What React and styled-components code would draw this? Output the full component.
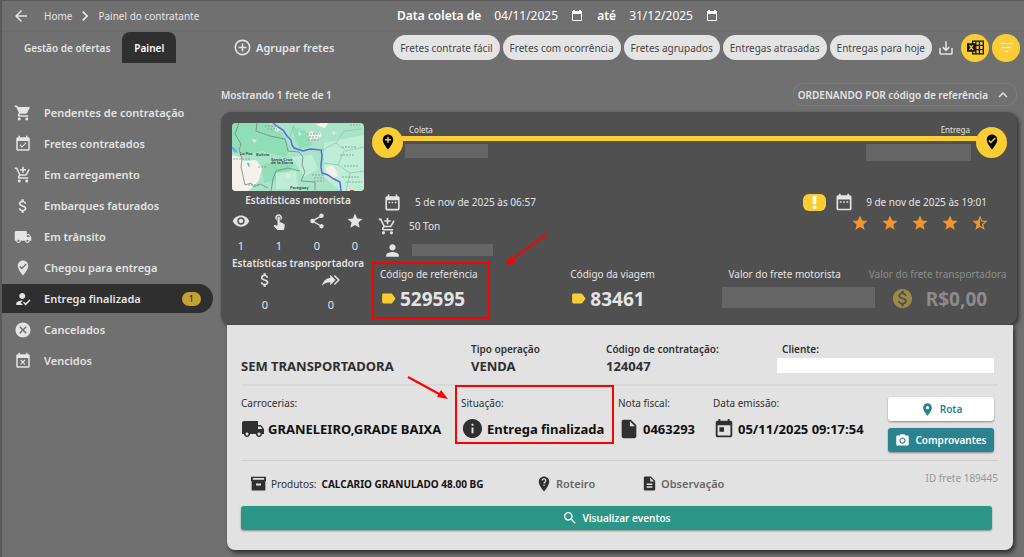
import styled, { createGlobalStyle, css } from "styled-components";
import { useState } from "react";
import {
  MdAddCircleOutline,
  MdAddShoppingCart,
  MdArrowBack,
  MdAttachMoney,
  MdCancel,
  MdChevronRight,
  MdDateRange,
  MdDescription,
  MdEventAvailable,
  MdEventBusy,
  MdExpandLess,
  MdFilterList,
  MdHowToReg,
  MdInfo,
  MdInsertDriveFile,
  MdLabel,
  MdLocalShipping,
  MdLocationOn,
  MdMonetizationOn,
  MdPerson,
  MdPhotoCamera,
  MdSaveAlt,
  MdSearch,
  MdShare,
  MdShoppingCart,
  MdStar,
  MdStarHalf,
  MdToday,
  MdTouchApp,
  MdVisibility,
} from "react-icons/md";

const PIN = "M12 2c3.9 0 7 3.1 7 7 0 5.2-7 13-7 13S5 14.200 5 9c0-3.900 3.100-7 7-7z";

const PinCheck = ({ size }) => (
  <svg width={size} height={size} viewBox="0 0 24 24" fill="currentColor" fillRule="evenodd">
    <path d={`${PIN}M10.470 14 17 7.410 15.600 6l-5.130 5.180L8.400 9.090 7 10.500z`} />
  </svg>
);

const PinPlus = ({ size }) => (
  <svg width={size} height={size} viewBox="0 0 24 24" fill="currentColor" fillRule="evenodd">
    <path d={`${PIN}M11 5v3H8v2h3v3h2v-3h3V8h-3V5z`} />
  </svg>
);

const PinQuestion = ({ size }) => (
  <svg width={size} height={size} viewBox="0 0 24 24">
    <path fill="currentColor" d={PIN} />
    <path fill="none" stroke="#e2e2e2" strokeWidth="1.6" d="M9.700 7.400a2.300 2.300 0 1 1 3.600 1.900c-.8.6-1.300 1-1.300 2.200" />
    <circle cx="12" cy="13.500" r="1" fill="#e2e2e2" />
  </svg>
);

const ShareAll = ({ size }) => (
  <svg width={size} height={size} viewBox="0 0 24 24" fill="currentColor">
    <path d="M11 9V5l7 7-7 7v-4.100C6 14.900 2.500 16.500 0 20 1 15 4 10 11 9" />
    <path fill="none" stroke="currentColor" strokeWidth="2" d="M16.500 6l6 6-6 6" />
  </svg>
);

const BoxIcon = ({ size }) => (
  <svg width={size} height={size} viewBox="0 0 24 24" fill="currentColor" fillRule="evenodd">
    <path d="M0 1h24v7h-1v15H1V8H0zm3 2v3h18V3zm5 9v3h8v-3z" />
  </svg>
);

const ExcelIcon = ({ size }) => (
  <svg width={size} height={size} viewBox="0 0 24 24">
    <path
      fill="none"
      stroke="#111"
      strokeWidth="1.800"
      d="M8 3h15v18H8zM10 9h13M10 15h13M12.500 3v18M17.500 3v18"
    />
    <path fill="#111" d="M0 6h12v12H0z" />
    <path stroke="#fbcd35" strokeWidth="1.800" d="M3.500 8.500l5 7M8.500 8.500l-5 7" />
  </svg>
);

const CalendarGlyph = () => (
  <svg width="12" height="12" viewBox="0 0 12 12">
    <path fill="none" stroke="#fff" d="M1.500 2.500h9v8h-9z" />
    <path fill="#fff" d="M1 1h10v3H1zM2 0h2v2H2zM8 0h2v2H8z" />
  </svg>
);

const RouteMap = () => (
  <svg viewBox="0 0 132 68" preserveAspectRatio="xMidYMid slice" role="img" aria-label="Mapa da rota">
    <rect width="132" height="68" fill="#a9e4c8" />
    <path fill="#8adcb4" d="M0 0h36l14 10 8 14-4 10-24-6-18 4-12-10zM30 42l18-6 14 6-10 14-20 4zM60 4l14 4 6 14-12 4-6-12z" opacity="0.800" />
    <path fill="#bfeed8" d="M92 20l40-8v56h-24l-16-14zM60 34l20-2 6 14-14 8zM44 50l20-2 2 18H44z" />
    <path fill="#f5f2ec" d="M0 32l8 2 4 4 12-1 6 8-3 12-5 6-6 5H0zM76 10l4-2 3 4 5-3 2 4-5 3-4-1-3 3zM84 2l4-2h8l-3 5zM94 44l6-2 4 5 2 6-5 2-6-3z" />
    <path fill="#d8f0dc" d="M44 4l4 2-2 3-4-2zM54 50l5 1-2 4-3-1zM66 8l4 3-3 2zM100 8l5 2-4 2zM20 16l5 1-3 3z" />
    <path fill="#5bb8dd" d="M0 23l4 3 2 4-4-1-2-3zM15 40l2 0 1 4-2-1z" />
    <g fill="none" stroke="#72877c">
      <path d="M7 0L3 11l3 5 3 5-2 6 3 9-1 8 4 18 6-2 3 4 6-3 8 4M25 0l-1 8 14 5 15 3 3 12 11 1 4 5-1 8 3 7-4 9 14 1v8M39 68l2-12 3-8 12-3 12 3" strokeWidth="0.800" />
      <path stroke="#93c5ad" strokeWidth="0.800" d="M92 26l12-6 8-12 18-2M104 20l10 8 18-4M112 28l-6 14 12 8 14-2M106 42l-14-2M118 50l-4 18M62 2l-4 12" />
    </g>
    <path fill="none" stroke="#5668e6" strokeWidth="1.500" d="M41 0l5 4 5 3 4 6 4 4 1 5 2 3 9 3 7-2 11 1 1 5-1 12 1 6 6 2 6 4 6 3 1 9" />
    <g fill="#435049" fontSize="4" fontWeight="700">
      <text x="24" y="33">Bolivia</text>
      <text x="39" y="38">Santa Cruz</text>
      <text x="39" y="41">de la Sierra</text>
      <text x="58" y="66">Paraguay</text>
      <text x="8" y="32">La Paz</text>
    </g>
    <g fill="none" stroke="#8ea39a" strokeWidth="1.200" strokeDasharray="2 1">
      <path d="M75 11h13M77 14h10M76 17h12M33 3h14M35 6h10M118 2h10M110 24h14M108 32h14M112 43h14M80 52h12M82 55h10M82 58h10M110 54h18M114 59h16M16 62h12M26 44h9M84 27h8M1 36h18" />
    </g>
    <path fill="#d9472f" d="M118 67h4v1h-4z" />
  </svg>
);

const menu = [
  { label: "Pendentes de contratação", Icon: MdShoppingCart },
  { label: "Fretes contratados", Icon: MdEventAvailable },
  { label: "Em carregamento", Icon: MdAddShoppingCart },
  { label: "Embarques faturados", Icon: MdAttachMoney },
  { label: "Em trânsito", Icon: MdLocalShipping },
  { label: "Chegou para entrega", Icon: PinCheck },
  { label: "Entrega finalizada", Icon: MdHowToReg, count: 1 },
  { label: "Cancelados", Icon: MdCancel },
  { label: "Vencidos", Icon: MdEventBusy },
];

const quickFilters = [
  "Fretes contrate fácil",
  "Fretes com ocorrência",
  "Fretes agrupados",
  "Entregas atrasadas",
  "Entregas para hoje",
];

const driverStats = [
  { label: "Visualizações", Icon: MdVisibility, value: 1 },
  { label: "Cliques", Icon: MdTouchApp, value: 1 },
  { label: "Compartilhamentos", Icon: MdShare, value: 0 },
  { label: "Favoritos", Icon: MdStar, value: 0 },
];

const carrierStats = [
  { label: "Propostas", Icon: MdAttachMoney, value: 0 },
  { label: "Encaminhamentos", Icon: ShareAll, value: 0 },
];

const App = () => {
  const [active, setActive] = useState("Entrega finalizada");
  const [from, setFrom] = useState("04/11/2025");
  const [to, setTo] = useState("31/12/2025");

  return (
    <>
      <GlobalStyle />
      <Page>
        <TopBar>
          <Breadcrumb aria-label="Navegação">
            <IconButton aria-label="Voltar"><MdArrowBack size={18} /></IconButton>
            <a href="#home">Home</a>
            <MdChevronRight size={20} />
            <a href="#painel">Painel do contratante</a>
          </Breadcrumb>
          <DateRange>
            <label htmlFor="from">Data coleta de</label>
            <DateField>
              <input id="from" value={from} onChange={(e) => setFrom(e.target.value)} />
              <IconButton aria-label="Abrir calendário inicial"><CalendarGlyph /></IconButton>
            </DateField>
            <label htmlFor="to">até</label>
            <DateField>
              <input id="to" value={to} onChange={(e) => setTo(e.target.value)} />
              <IconButton aria-label="Abrir calendário final"><CalendarGlyph /></IconButton>
            </DateField>
          </DateRange>
        </TopBar>

        <ToolBar>
          <Tabs>
            <Tab>Gestão de ofertas</Tab>
            <Tab $active>Painel</Tab>
          </Tabs>
          <GroupButton><MdAddCircleOutline size={19} />Agrupar fretes</GroupButton>
          <Actions>
            {quickFilters.map((name) => <Chip key={name}>{name}</Chip>)}
            <DownloadButton aria-label="Baixar"><MdSaveAlt size={18} /></DownloadButton>
            <RoundButton aria-label="Exportar para Excel"><ExcelIcon size={17} /></RoundButton>
            <RoundButton aria-label="Filtrar"><MdFilterList size={19} /></RoundButton>
          </Actions>
        </ToolBar>

        <Body>
          <Sidebar>
            {menu.map(({ label, Icon, count }) => (
              <MenuItem key={label} $active={active === label} onClick={() => setActive(label)}>
                <Icon size={18} />
                <span>{label}</span>
                {count && <Count>{count}</Count>}
              </MenuItem>
            ))}
          </Sidebar>

          <Main>
            <ListHeader>
              <strong>Mostrando 1 frete de 1</strong>
              <SortButton>ORDENANDO POR código de referência<MdExpandLess size={18} /></SortButton>
            </ListHeader>

            <Shipment>
              <Summary>
                <Stats>
                  <MapFrame><RouteMap /></MapFrame>
                  <StatsTitle>Estatísticas motorista</StatsTitle>
                  <DriverStats>
                    {driverStats.map(({ label, Icon, value }) => (
                      <Stat key={label} title={label}><Icon size={18} />{value}</Stat>
                    ))}
                  </DriverStats>
                  <StatsTitle>Estatísticas transportadora</StatsTitle>
                  <CarrierStats>
                    {carrierStats.map(({ label, Icon, value }) => (
                      <Stat key={label} title={label}><Icon size={18} />{value}</Stat>
                    ))}
                  </CarrierStats>
                </Stats>

                <Trip>
                  <Route>
                    <Stop><PinPlus size={18} /></Stop>
                    <Track>
                      <TrackRow><span>Coleta</span><span>Entrega</span></TrackRow>
                      <TrackLine />
                      <TrackPlaces><Hidden $w={83} $h={14} /><Hidden $w={105} $h={17} /></TrackPlaces>
                    </Track>
                    <Stop><PinCheck size={18} /></Stop>
                  </Route>

                  <Schedule>
                    <Pickup>
                      <InfoLine $indent={11} $gap={13}><MdDateRange size={19} />5 de nov de 2025 às 06:57</InfoLine>
                      <InfoLine $indent={6} $gap={12}><MdAddShoppingCart size={19} />50 Ton</InfoLine>
                      <InfoLine $indent={11} $gap={10}><MdPerson size={19} /><Hidden $w={81} $h={12} /></InfoLine>
                    </Pickup>
                    <Delivery>
                      <InfoLine $indent={0} $gap={8}>
                        <Alert>!</Alert>
                        <DeliveryDate><MdDateRange size={20} />9 de nov de 2025 às 19:01</DeliveryDate>
                      </InfoLine>
                      <Stars role="img" aria-label="4,5 de 5">
                        <MdStar size={18} />
                        <MdStar size={18} />
                        <MdStar size={18} />
                        <MdStar size={18} />
                        <MdStarHalf size={18} />
                      </Stars>
                    </Delivery>
                  </Schedule>

                  <Amounts>
                    <Amount $marked>
                      <span>Código de referência</span>
                      <strong><MdLabel size={17} />529595</strong>
                    </Amount>
                    <Amount>
                      <span>Código da viagem</span>
                      <strong><MdLabel size={17} />83461</strong>
                    </Amount>
                    <Amount>
                      <span>Valor do frete motorista</span>
                      <AmountHidden />
                    </Amount>
                    <Amount $faded>
                      <span>Valor do frete transportadora</span>
                      <strong><MdMonetizationOn size={23} />R$0,00</strong>
                    </Amount>
                  </Amounts>
                </Trip>
              </Summary>

              <Details>
                <ContractRow>
                  <Field><b>SEM TRANSPORTADORA</b></Field>
                  <Field><small>Tipo operação</small><b>VENDA</b></Field>
                  <Field><small>Código de contratação:</small><b>124047</b></Field>
                  <Field $indent>
                    <label htmlFor="cliente">Cliente:</label>
                    <ClientInput id="cliente" readOnly />
                  </Field>
                </ContractRow>

                <StatusRow>
                  <Status>
                    <span>Carrocerias:</span>
                    <b><MdLocalShipping size={24} />GRANELEIRO,GRADE BAIXA</b>
                  </Status>
                  <Status $marked>
                    <span>Situação:</span>
                    <b><MdInfo size={23} />Entrega finalizada</b>
                  </Status>
                  <Status>
                    <span>Nota fiscal:</span>
                    <b><MdInsertDriveFile size={22} />0463293</b>
                  </Status>
                  <Status>
                    <span>Data emissão:</span>
                    <b><MdToday size={22} />05/11/2025 09:17:54</b>
                  </Status>
                  <ButtonColumn>
                    <SmallButton><MdLocationOn size={15} />Rota</SmallButton>
                    <SmallButton $filled><MdPhotoCamera size={15} />Comprovantes</SmallButton>
                  </ButtonColumn>
                </StatusRow>

                <FooterRow>
                  <Product><BoxIcon size={15} /><span>Produtos:</span><b>CALCARIO GRANULADO 48.00 BG</b></Product>
                  <LinkButton><PinQuestion size={18} />Roteiro</LinkButton>
                  <LinkButton><MdDescription size={17} />Observação</LinkButton>
                  <FreightId>ID frete 189445</FreightId>
                </FooterRow>

                <EventsButton><MdSearch size={16} />Visualizar eventos</EventsButton>
              </Details>
              <Arrows viewBox="0 0 797 437">
                <path d="M326 122L290 148M187 265L220 283" stroke="red" strokeWidth="2" />
                <path d="M284 153l6-9 5 7zM227 287l-11-2 4-7z" fill="red" />
              </Arrows>
            </Shipment>
          </Main>
        </Body>
      </Page>
    </>
  );
};

export default App;

const GlobalStyle = createGlobalStyle`
  *, *::after {
    box-sizing: border-box;
  }

  body {
    margin: 0;
    background: #707070;
    color: #e4e4e4;
    font: 11px/16px "Noto Sans", "Liberation Sans", sans-serif;
  }

  button, input {
    font: inherit;
    color: inherit;
    background: none;
    border: 0;
    padding: 0;
    margin: 0;
  }

  button {
    cursor: pointer;
    white-space: nowrap;
  }

  svg {
    display: block;
    flex-shrink: 0;
  }
`;

const Page = styled.div`
  min-height: 100vh;
  border-left: 2px solid #5a5a5a;
  border-top: 1px solid #5a5a5a;
`;

const TopBar = styled.header`
  display: flex;
  align-items: center;
  height: 31px;
  border-bottom: 1px solid #6b6b6b;
`;

const Breadcrumb = styled.nav`
  display: flex;
  align-items: center;
  width: 395px;
  padding-left: 10px;
  font-size: 10px;

  a {
    color: inherit;
    text-decoration: none;
  }

  button {
    margin-right: 14px;
  }

  svg + a {
    margin-left: 3px;
  }

  > svg {
    margin-left: 3px;
  }
`;

const IconButton = styled.button`
  display: inline-flex;
`;

const DateRange = styled.div`
  display: flex;
  align-items: center;
  color: #fff;

  label {
    font-size: 12px;
    font-weight: 600;
    margin-right: 10px;
  }
`;

const DateField = styled.span`
  display: inline-flex;
  align-items: center;
  margin-right: 14px;

  input {
    width: 80px;
    padding-left: 3px;
    font-size: 12px;
  }
`;

const ToolBar = styled.div`
  display: flex;
  align-items: center;
  height: 31px;
  padding-right: 4px;
`;

const Tabs = styled.div`
  display: flex;
  width: 231px;
  padding-left: 10px;
`;

const Tab = styled.button`
  height: 31px;
  padding: 0 12px;
  border-radius: 8px 8px 0 0;
  font-size: 10px;
  font-weight: 600;
  color: ${({ $active }) => ($active ? "#fff" : "#e4e4e4")};
  background: ${({ $active }) => ($active ? "#2f2f2f" : "transparent")};
`;

const GroupButton = styled.button`
  display: flex;
  align-items: center;
  gap: 4px;
  font-weight: 600;
`;

const Actions = styled.div`
  display: flex;
  align-items: center;
  gap: 3px;
  margin-left: auto;
`;

const Chip = styled.button`
  height: 25px;
  padding: 0 7px;
  border-radius: 13px;
  background: #e4e4e4;
  color: #444;
  font-size: 10px;
`;

const DownloadButton = styled(IconButton)`
  margin: 0 3px 0 2px;
`;

const RoundButton = styled.button`
  display: grid;
  place-items: center;
  width: 28px;
  height: 28px;
  border-radius: 50%;
  background: #fbcd35;
`;

const Body = styled.div`
  display: flex;
`;

const Sidebar = styled.nav`
  display: flex;
  flex-direction: column;
  gap: 2px;
  width: 211px;
  padding-top: 35px;
  flex-shrink: 0;
`;

const MenuItem = styled.button`
  display: flex;
  align-items: center;
  height: 29px;
  padding: 0 12px;
  gap: 12px;
  border-radius: 0 15px 15px 0;
  font-weight: 600;
  background: ${({ $active }) => ($active ? "#2f2f2f" : "transparent")};
`;

const Count = styled.span`
  margin-left: auto;
  padding: 0 7px;
  border-radius: 8px;
  line-height: 14px;
  font-size: 9px;
  font-weight: 400;
  color: #222;
  background: #c3a233;
`;

const Main = styled.main`
  flex: 1;
  min-width: 0;
  padding: 20px 7px 8px 8px;
`;

const ListHeader = styled.div`
  display: flex;
  align-items: center;
  justify-content: space-between;
  margin-bottom: 6px;
  font-size: 10px;

  strong {
    font-weight: 600;
  }
`;

const SortButton = styled.button`
  display: flex;
  align-items: center;
  gap: 6px;
  height: 23px;
  padding: 0 4px;
  border: 1px solid #7c7c7c;
  border-radius: 10px;
  font-weight: 600;
`;

const Shipment = styled.article`
  position: relative;
`;

const Summary = styled.section`
  position: relative;
  display: flex;
  gap: 8px;
  height: 213px;
  padding: 11px 10px 0 11px;
  border-radius: 10px;
  background: #505050;
  box-shadow: 2px 2px 4px #303030;
`;

const Stats = styled.div`
  width: 132px;
  flex-shrink: 0;
`;

const MapFrame = styled.div`
  height: 68px;
  overflow: hidden;
  border-radius: 4px;

  svg {
    width: 100%;
    height: 100%;
  }
`;

const StatsTitle = styled.h3`
  margin: 1px -4px 0;
  text-align: center;
  font-size: 10px;
  font-weight: 600;
  white-space: nowrap;
`;

const DriverStats = styled.div`
  display: flex;
  justify-content: space-between;
  padding-top: 4px;
`;

const CarrierStats = styled.div`
  display: flex;
  justify-content: space-between;
  padding: 0 24px;
`;

const Stat = styled.div`
  display: flex;
  flex-direction: column;
  align-items: center;
  gap: 8px;
`;

const Trip = styled.div`
  flex: 1;
  min-width: 0;
`;

const Route = styled.div`
  display: flex;
  align-items: center;
  height: 38px;
`;

const Stop = styled.div`
  display: grid;
  place-items: center;
  width: 31px;
  height: 31px;
  border-radius: 50%;
  color: #000;
  background: #fbcd35;
`;

const Track = styled.div`
  flex: 1;
  margin: 0 -1px;
`;

const TrackRow = styled.div`
  display: flex;
  justify-content: space-between;
  padding: 0 7px;
  font-size: 8px;
  line-height: 13px;
`;

const TrackLine = styled.div`
  height: 5px;
  background: #fbcd35;
`;

const TrackPlaces = styled.div`
  display: flex;
  justify-content: space-between;
  padding: 3px 6px 0 3px;
`;

const Hidden = styled.span`
  width: ${({ $w }) => $w}px;
  height: ${({ $h }) => $h}px;
  background: #666;
`;

const Schedule = styled.div`
  display: flex;
  justify-content: space-between;
  height: 105px;
  padding-top: 29px;
`;

const Pickup = styled.div`
  display: flex;
  flex-direction: column;
`;

const InfoLine = styled.div`
  display: flex;
  align-items: center;
  height: 24px;
  gap: ${({ $gap }) => $gap}px;
  padding-left: ${({ $indent }) => $indent}px;
  font-size: 10px;
`;

const Delivery = styled.div`
  padding-right: 20px;
`;

const Alert = styled.strong`
  width: 23px;
  border-radius: 6px;
  background: #fbcd35;
  color: #fff;
  font-size: 17px;
  font-weight: 900;
  line-height: 17px;
  text-align: center;
`;

const DeliveryDate = styled.span`
  display: inline-flex;
  align-items: center;
  gap: 12px;
`;

const Stars = styled.div`
  display: flex;
  justify-content: flex-end;
  gap: 12px;
  margin-right: -2px;
  color: #f3952d;
`;

const marker = css`
  &::after {
    content: "";
    position: absolute;
    border: 2px solid red;
    pointer-events: none;
  }
`;

const Amounts = styled.div`
  display: grid;
  grid-template-columns: minmax(0, 190fr) minmax(0, 151fr) minmax(0, 147fr) minmax(0, 138fr);
  margin-left: 8px;
`;

const Amount = styled.div`
  position: relative;
  color: ${({ $faded }) => ($faded ? "#8c8c8c" : "#e4e4e4")};
  font-size: 10px;
  white-space: nowrap;

  &:nth-child(3) {
    padding-left: 7px;
  }

  strong {
    display: flex;
    align-items: center;
    gap: ${({ $faded }) => ($faded ? 12 : 3)}px;
    height: 33px;
    padding-left: ${({ $faded }) => ($faded ? 22 : 0)}px;
    font-size: 19px;
    font-weight: 700;
  }

  svg {
    color: ${({ $faded }) => ($faded ? "#9c8a44" : "#fbcd35")};
  }

  ${({ $marked }) => $marked && marker}

  &::after {
    top: -4px;
    left: -8px;
    width: 118px;
    height: 57px;
  }
`;

const AmountHidden = styled.div`
  width: 153px;
  height: 21px;
  margin: 5px 0 0 -7px;
  background: #666;
`;

const Details = styled.section`
  position: relative;
  margin: 0 4px 0 6px;
  padding: 0 15px 20px 14px;
  border-radius: 0 0 8px 8px;
  background: #e2e2e2;
  color: #303030;
  box-shadow: 2px 3px 4px #303030;
`;

const ContractRow = styled.div`
  display: grid;
  grid-template-columns: 230fr 135fr 171fr 221fr;
  align-items: end;
  height: 61px;
  padding-bottom: 9px;
  border-bottom: 2px solid #d8d8d8;
`;

const Field = styled.div`
  display: flex;
  flex-direction: column;
  white-space: nowrap;

  small, label {
    padding-left: ${({ $indent }) => ($indent ? 5 : 0)}px;
    font-size: 10px;
    font-weight: 600;
  }

  b {
    font-size: 13px;
    line-height: 18px;
    font-weight: 700;
  }
`;

const ClientInput = styled.input`
  height: 15px;
  margin: 1px 4px 2px 0;
  background: #fff;
`;

const StatusRow = styled.div`
  display: grid;
  grid-template-columns: 220fr 157fr 95fr 175fr 110fr;
  height: 75px;
  padding-top: 9px;
  border-bottom: 1px solid #cfcfcf;
`;

const Status = styled.div`
  position: relative;
  min-width: 0;
  font-size: 10px;
  white-space: nowrap;

  b {
    display: flex;
    align-items: center;
    gap: 3px;
    height: 35px;
    color: #111;
    font-size: 13px;
    font-weight: 700;
  }

  svg {
    color: #303030;
  }

  ${({ $marked }) => $marked && marker}

  &::after {
    top: -10px;
    left: -6px;
    width: 159px;
    height: 59px;
  }
`;

const ButtonColumn = styled.div`
  display: flex;
  flex-direction: column;
  gap: 7px;
  padding: 2px 4px 0 0;
`;

const SmallButton = styled.button`
  display: flex;
  align-items: center;
  justify-content: center;
  gap: 5px;
  height: 24px;
  border-radius: 3px;
  font-size: 10px;
  font-weight: 600;
  color: ${({ $filled }) => ($filled ? "#fff" : "#2b8390")};
  background: ${({ $filled }) => ($filled ? "#2b8390" : "#fff")};
  box-shadow: 0 1px 2px #888;
`;

const FooterRow = styled.div`
  display: flex;
  align-items: center;
  height: 45px;
  padding-left: 10px;
`;

const Product = styled.div`
  display: flex;
  align-items: center;
  width: 284px;
  gap: 5px;
  font-size: 10px;
  white-space: nowrap;

  b {
    color: #111;
    font-weight: 700;
  }
`;

const LinkButton = styled.button`
  display: flex;
  align-items: center;
  width: 106px;
  gap: 3px;
  font-weight: 600;
  color: #666;

  svg {
    color: #303030;
  }
`;

const FreightId = styled.span`
  margin: 0 0 12px auto;
  font-size: 10px;
  color: #999;
`;

const EventsButton = styled.button`
  display: flex;
  align-items: center;
  justify-content: center;
  gap: 4px;
  width: calc(100% - 6px);
  height: 24px;
  border-radius: 3px;
  font-size: 10px;
  font-weight: 600;
  color: #fff;
  background: #2b9586;
  box-shadow: 0 1px 2px #888;
`;

const Arrows = styled.svg`
  position: absolute;
  top: 0;
  left: 0;
  width: 797px;
  height: 437px;
  pointer-events: none;
`;
